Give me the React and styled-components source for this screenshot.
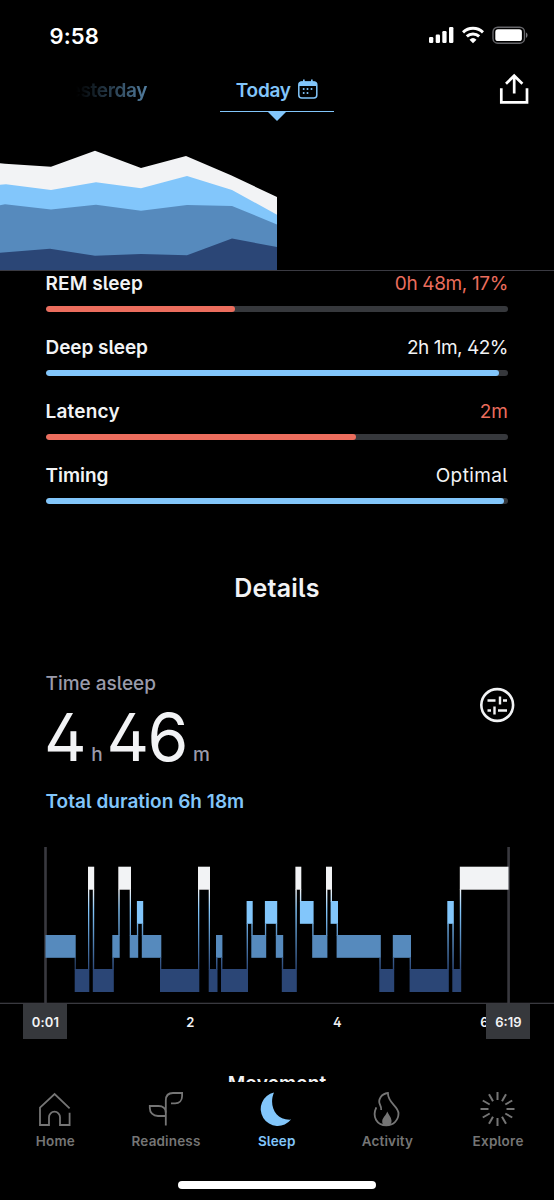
import React from 'react';
import styled, { createGlobalStyle } from 'styled-components';

const color = {
  white: '#f2f3f5',
  sky: '#82c6fb',
  mid: '#568abd',
  deep: '#2b4676',
  red: '#eb6d5d',
  track: '#36383c',
  muted: '#9a9bab',
  tab: '#757575',
};

const GlobalStyle = createGlobalStyle`
  * { box-sizing: border-box; }
  body {
    margin: 0;
    background: #000;
    color: ${color.white};
    font-family: Inter, "Liberation Sans", sans-serif;
    font-feature-settings: 'cv02' 1, 'cv05' 1;
  }
  svg { display: block; flex: none; }
`;

const Screen = styled.div`
  width: 554px;
  height: 1200px;
  display: flex;
  flex-direction: column;
  overflow: hidden;
  background: #000;
`;

const Text = styled.span`
  font-size: ${p => p.$size || 19}px;
  font-weight: ${p => p.$weight || 560};
  line-height: ${p => p.$line || 24}px;
  letter-spacing: ${p => p.$track || 0}px;
  color: ${p => p.$color || color.white};
  white-space: nowrap;
`;

const StatusBar = styled.div`
  flex: none;
  height: 66px;
  padding: 24px 25px 0 49.5px;
  display: flex;
  justify-content: space-between;
  align-items: flex-start;
`;

const StatusIcons = styled.div`
  display: flex;
  gap: 8px;
  padding-top: 2px;
`;

const Header = styled.header`
  flex: none;
  height: 74px;
  display: grid;
  grid-template-columns: 220px 114px 1fr;
  align-items: start;
`;

const PreviousDay = styled.div`
  display: flex;
  justify-content: flex-end;
  padding: 13px 73px 0 0;
  mask-image: linear-gradient(to right, transparent 76px, rgba(0, 0, 0, 0.66) 150px);
`;

const CurrentDay = styled.div`
  display: flex;
  flex-direction: column;
  align-items: center;
`;

const CurrentLabel = styled.div`
  width: 100%;
  height: 46px;
  padding-top: 13px;
  display: flex;
  justify-content: center;
  gap: 7.5px;
  background: linear-gradient(${color.sky}, ${color.sky}) 0 100% / 100% 1.4px no-repeat;
`;

const Pointer = styled.div`
  width: 0;
  border: 9px solid transparent;
  border-top-color: ${color.sky};
  border-bottom: 0;
`;

const ShareButton = styled.button`
  justify-self: end;
  margin: 7px 25px 0 0;
  padding: 0;
  border: 0;
  background: none;
`;

const Trend = styled.div`
  flex: none;
  height: 131px;
  border-bottom: 1px solid #3a3a42;
`;

const Content = styled.main`
  flex: none;
  height: 811px;
  overflow: hidden;
`;

const MetricRow = styled.div`
  height: 64px;
  padding: 0 46px 0 45.5px;
`;

const MetricHead = styled.div`
  display: flex;
  justify-content: space-between;
  padding-top: 1px;
  margin-bottom: 10px;
`;

const Track = styled.div`
  height: 6px;
  border-radius: 3px;
  background: ${color.track};
  overflow: hidden;
`;

const Fill = styled.div`
  width: ${p => p.$value}%;
  height: 6px;
  border-radius: 3px;
  background: ${p => p.$color};
`;

const SectionTitle = styled.h2`
  margin: 45px 0 0;
  text-align: center;
  font-size: 25px;
  font-weight: 580;
  line-height: 32px;
  letter-spacing: 0.25px;
`;

const Summary = styled.section`
  margin-top: 68px;
  padding: 0 39px 0 45.5px;
  display: flex;
  justify-content: space-between;
  align-items: flex-start;
`;

const SummaryText = styled.div`
  display: flex;
  flex-direction: column;
`;

const Duration = styled.div`
  height: 94px;
  padding-top: 8px;
  display: flex;
  align-items: baseline;
  margin-left: -1.5px;
`;

const Unit = styled(Text)`
  margin: 0 ${p => p.$after || 0}px 0 ${p => p.$before}px;
`;

const FilterButton = styled.button`
  margin-top: 15px;
  padding: 0;
  border: 0;
  background: none;
`;

const Hypnogram = styled.figure`
  margin: 33px 0 0;
`;

const Axis = styled.div`
  position: relative;
  height: 35px;
  padding-left: 23.4px;
  display: flex;
  overflow: hidden;
`;

const Chip = styled.div`
  flex: none;
  width: 44px;
  height: 35px;
  background: ${color.track};
  display: flex;
  align-items: center;
  justify-content: center;
`;

const EndChip = styled(Chip)`
  position: absolute;
  top: 0;
  right: 23.6px;
`;

const Ticks = styled.div`
  margin-left: 49.5px;
  display: grid;
  grid-template-columns: repeat(3, 147px);
  place-items: center;
`;

const NextTitle = styled.div`
  margin-top: 33px;
  text-align: center;
`;

const TabBar = styled.nav`
  flex: none;
  padding-top: 9px;
  display: grid;
  grid-template-columns: repeat(5, 110.7px);
`;

const Tab = styled.div`
  display: flex;
  flex-direction: column;
  align-items: center;
  gap: 4px;
  color: ${p => (p.$active ? color.sky : color.tab)};
`;

const HomeIndicator = styled.div`
  width: 198px;
  height: 8px;
  margin: 30px auto 0;
  border-radius: 4px;
  background: #fff;
`;

const metrics = [
  { label: 'REM sleep', value: '0h 48m, 17%', fill: 41, alert: true, ls: 0.12, vs: -0.36 },
  { label: 'Deep sleep', value: '2h 1m, 42%', fill: 98.1, ls: -0.05, vs: -0.48 },
  { label: 'Latency', value: '2m', fill: 67.1, alert: true, ls: 0.2, vs: 0 },
  { label: 'Timing', value: 'Optimal', fill: 99.1, ls: -0.05, vs: 0.4 },
];

const levels = {
  w: { y: 19.7, h: 23, fill: color.white },
  l: { y: 54, h: 22.8, fill: color.sky },
  m: { y: 88, h: 22.8, fill: color.mid },
  d: { y: 122, h: 23, fill: color.deep },
};

const stages = [
  ['m', 45.5, 75.7], ['d', 74.7, 89.3], ['w', 88, 94.2], ['d', 92.8, 113.8], ['m', 112.3, 119.7],
  ['w', 118.3, 131], ['m', 129.7, 138.2], ['l', 136.9, 143.2], ['m', 141.8, 161.3], ['d', 160, 199.3],
  ['w', 198, 210], ['d', 208.7, 217.5], ['m', 216, 222.4], ['d', 221, 248], ['l', 246.6, 252.7],
  ['m', 251.3, 266.2], ['l', 264.9, 277.2], ['m', 275.8, 283.2], ['d', 281.8, 296.8], ['w', 295.4, 301.3],
  ['l', 299.9, 313.6], ['m', 312.2, 327.4], ['w', 326, 332], ['l', 330.6, 338], ['m', 336.6, 380.8],
  ['d', 379.3, 394.2], ['m', 392.8, 411], ['d', 409.6, 448.8], ['l', 447.3, 453.8], ['d', 452.3, 461.2],
  ['w', 459.8, 508.5],
];

function StageChart() {
  return (
    <svg width="554" height="157" viewBox="0 0 554 157">
      <defs>
        <linearGradient id="link" gradientUnits="userSpaceOnUse" x1="0" y1="42" x2="0" y2="124">
          <stop offset="0" stopColor={color.white} />
          <stop offset="0.26" stopColor={color.sky} />
          <stop offset="0.6" stopColor={color.mid} />
          <stop offset="1" stopColor={color.deep} />
        </linearGradient>
      </defs>
      <rect y="155.7" width="554" height="1.3" fill="#39393f" />
      <rect x="44.2" width="2.6" height="157" fill="#39393f" />
      <rect x="507.3" width="2.6" height="157" fill="#39393f" />
      {stages.map(([k, a, b]) => (
        <rect key={a} x={a} y={levels[k].y} width={b - a} height={levels[k].h} fill={levels[k].fill} />
      ))}
      {stages.slice(1).map(([k, a], i) => {
        const [pk, , pb] = stages[i];
        const [top, low] = levels[k].y < levels[pk].y ? [levels[k], levels[pk]] : [levels[pk], levels[k]];
        const y = top.y + top.h;
        return <rect key={a} x={a} y={y - 0.5} width={pb - a} height={low.y - y + 1} fill="url(#link)" />;
      })}
    </svg>
  );
}

function TrendChart() {
  return (
    <svg width="277" height="130" viewBox="0 140 277 130">
      <path fill={color.white} d="M0 163.3 5 163.7 51 166.7 95 150.8 141 168 186 156 231 175.3 277 197V270H0Z" />
      <path fill={color.sky} d="M0 184.7 6 184.2 51 190 96 182.3 141 188.3 187 176 232 190 277 214.7V270H0Z" />
      <path fill={color.mid} d="M0 205.3 5 204.3 51 209.5 96 204.7 141 210.7 187 205 232 206 277 224.5V270H0Z" />
      <path fill={color.deep} d="M0 252.7 50 248.7 95 255.7 141 254 187 255.3 232 238.5 277 247V270H0Z" />
    </svg>
  );
}

const line = { fill: 'none', stroke: 'currentColor', strokeWidth: 1.8 };

const HomeIcon = () => (
  <svg width="36" height="36" {...line}>
    <path d="M32.6 17.3 17.6 3 3 16.7V34h9v-7.8a5.5 5.5 0 0 1 11 0V34h9.6V21.7" />
  </svg>
);

const ReadinessIcon = () => (
  <svg width="36" height="36" {...line}>
    <path d="M17.8 34.5V9.5C17.8 4.8 20.5 2 25 2h9.1v3c0 4.6-2.8 7.4-7 7.4H23" />
    <path d="M17.8 25H10c-5 0-8.2-3.4-8.2-8V15h8.7c4.5 0 7.3 2.6 7.3 6.4" />
  </svg>
);

const MoonIcon = () => (
  <svg width="36" height="36" fill="currentColor">
    <path d="M15 1.4A17 17 0 1 0 32 28.6C16 29.5 9.5 14 15 1.4Z" />
  </svg>
);

const FlameIcon = () => (
  <svg width="36" height="36" {...line}>
    <path d="M7.3 16.3C2.8 26 8 34.3 17.3 34.3c7.4 0 12.2-5.5 12.2-11.8C29.5 15 18.9 12.5 18.9 2 12.3 2.6 8.6 8.6 11 13.7c.9 1.9 1.4 3.3 1.2 5.3" />
    <path fill="currentColor" stroke="none" d="M18.2 20.5c-.9 3.7-4.8 6-5 9.7-.1 2 .8 3.4 2 4.100h5.300c1.500-1 2.200-2.700 2-4.700-.3-3.600-2.900-5.800-4.300-9.100Z" />
  </svg>
);

const ExploreIcon = () => (
  <svg width="36" height="36" {...line} strokeWidth="2">
    {Array.from({ length: 12 }, (_, i) => (
      <path key={i} d="M17.5 1v8" transform={`rotate(${i * 30} 17.5 18)`} />
    ))}
  </svg>
);

const tabs = [
  ['Home', HomeIcon, 0.15],
  ['Readiness', ReadinessIcon, 0.15],
  ['Sleep', MoonIcon, 0.1],
  ['Activity', FlameIcon, 0.15],
  ['Explore', ExploreIcon, 0.25],
];

export default function App() {
  return (
    <Screen>
      <GlobalStyle />
      <StatusBar>
        <Text $size={22} $weight={600} $track={0.1} $color="#fff">9:58</Text>
        <StatusIcons>
          <svg width="26" height="18" fill="#fff">
            <rect x="1" y="11" width="4.3" height="6" rx="1.2" />
            <rect x="7.7" y="8.5" width="4.3" height="8.5" rx="1.2" />
            <rect x="14.3" y="5" width="4.3" height="12" rx="1.2" />
            <rect x="21" y="1" width="4.4" height="16" rx="1.2" />
          </svg>
          <svg width="22" height="18" viewBox="0 0 22 18" fill="none" stroke="#fff" strokeWidth="3">
            <path d="M1 6.3a14.500 14.500 0 0 1 20 0" />
            <path d="M4.800 10.400a9 9 0 0 1 12.400 0" />
            <path fill="#fff" stroke="none" d="M11 17.300 7.500 13.700a5.200 5.200 0 0 1 7 0Z" />
          </svg>
          <svg width="37" height="18" viewBox="0 0 37 18">
            <rect x="1" y="1.200" width="31.500" height="16" rx="4.800" fill="none" stroke="#66666a" strokeWidth="1.400" />
            <rect x="3.300" y="3.300" width="26.600" height="11.800" rx="2.700" fill="#fff" />
            <path d="M34 6.500c2 .7 2 4.600 0 5.300Z" fill="#77777b" />
          </svg>
        </StatusIcons>
      </StatusBar>

      <Header>
        <PreviousDay>
          <Text $track={-0.35} $color={color.sky}>Yesterday</Text>
        </PreviousDay>
        <CurrentDay>
          <CurrentLabel>
            <Text $track={-0.3} $color={color.sky}>Today</Text>
            <svg width="20" height="20" fill={color.sky}>
              <rect x="0.8" y="3" width="18" height="16" rx="3" fill="none" stroke={color.sky} strokeWidth="1.5" />
              <path d="M1 7V5a2.5 2.5 0 0 1 2.5-2.5h12.6A2.5 2.5 0 0 1 18.600 5v2Z" />
              <rect x="5" y="0.5" width="1.7" height="3" />
              <rect x="13" y="0.5" width="1.7" height="3" />
              <circle cx="5.7" cy="10" r="1" />
              <circle cx="9.5" cy="10" r="1" />
              <circle cx="13.5" cy="10" r="1" />
              <circle cx="5.7" cy="14" r="1" />
              <circle cx="9.5" cy="14" r="1" />
            </svg>
          </CurrentLabel>
          <Pointer />
        </CurrentDay>
        <ShareButton aria-label="Share">
          <svg width="30" height="32" fill="none" stroke="#fff" strokeWidth="2.7">
            <path d="M2.300 15.300V29.400H28V15.300" />
            <path d="M15.200 20.500V3M7 10.700 15.200 2.700l8.200 8" />
          </svg>
        </ShareButton>
      </Header>

      <Trend><TrendChart /></Trend>

      <Content>
        {metrics.map(m => (
          <MetricRow key={m.label}>
            <MetricHead>
              <Text $track={m.ls}>{m.label}</Text>
              <Text $weight={400} $track={m.vs} $color={m.alert ? color.red : color.white}>{m.value}</Text>
            </MetricHead>
            <Track><Fill $value={m.fill} $color={m.alert ? color.red : color.sky} /></Track>
          </MetricRow>
        ))}

        <SectionTitle>Details</SectionTitle>

        <Summary>
          <SummaryText>
            <Text $weight={540} $track={0} $color={color.muted}>Time asleep</Text>
            <Duration>
              <Text $size={66} $weight={400} $line={66}>4</Text>
              <Unit $before={4.5} $after={4} $weight={500} $color={color.muted}>h</Unit>
              <Text $size={66} $weight={400} $line={66} $track={-1.6}>46</Text>
              <Unit $before={6} $weight={500} $color={color.muted}>m</Unit>
            </Duration>
            <Text $track={0.03} $color={color.sky}>Total duration 6h 18m</Text>
          </SummaryText>
          <FilterButton aria-label="Filters">
            <svg width="36" height="36" fill="none" stroke={color.white} strokeWidth="2.6">
              <circle cx="18.2" cy="18" r="15.9" />
              <path d="M8.500 13.500h8M24 13.500h4M8.500 23.500h3.500M19 23.500h9M21 9.500v8M15.500 19.500v8" strokeWidth="2.400" />
            </svg>
          </FilterButton>
        </Summary>

        <Hypnogram>
          <StageChart />
          <Axis>
            <Chip><Text $size={13} $weight={600} $track={0.15}>0:01</Text></Chip>
            <Ticks>
              <Text $size={13} $weight={600}>2</Text>
              <Text $size={13} $weight={600}>4</Text>
              <Text $size={13} $weight={600}>6</Text>
            </Ticks>
            <EndChip><Text $size={13} $weight={600}>6:19</Text></EndChip>
          </Axis>
        </Hypnogram>

        <NextTitle><Text $weight={600} $track={0.15}>Movement</Text></NextTitle>
      </Content>

      <TabBar>
        {tabs.map(([label, Icon, track]) => (
          <Tab key={label} $active={label === 'Sleep'}>
            <Icon />
            <Text $size={13.5} $line={20} $weight={label === 'Sleep' ? 600 : 560} $track={track} $color="inherit">{label}</Text>
          </Tab>
        ))}
      </TabBar>
      <HomeIndicator />
    </Screen>
  );
}
